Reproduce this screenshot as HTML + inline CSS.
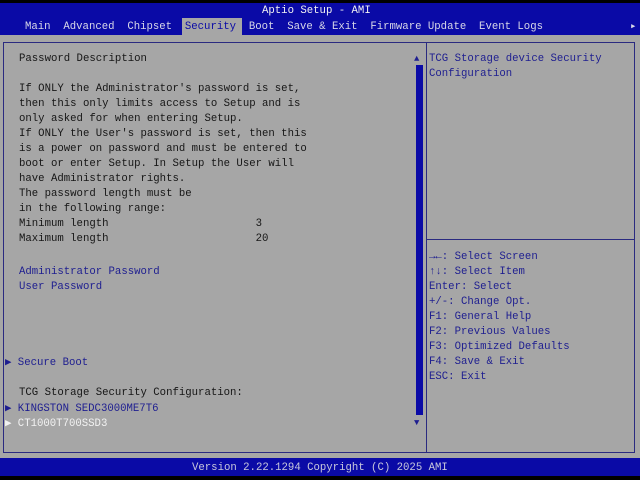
<!DOCTYPE html>
<html><head><meta charset="utf-8"><style>
*{margin:0;padding:0;box-sizing:border-box}
body{width:640px;height:480px;background:#000;position:relative;overflow:hidden;font-family:"Liberation Mono","DejaVu Sans Mono",monospace;font-size:10.67px;}
.a{position:absolute;white-space:pre;line-height:15px}
.k{color:#161616}.b{color:#1e1e90}.w{color:#f2f2f2}
</style></head><body>
<div style="position:absolute;left:0;top:3px;width:640px;height:32px;background:#0a0aa6"></div>
<div style="position:absolute;left:0;top:35px;width:640px;height:423px;background:#a6a6a6"></div>
<div style="position:absolute;left:0;top:458px;width:640px;height:18px;background:#0a0aa6"></div>
<div style="position:absolute;left:182px;top:18px;width:60px;height:17px;background:#a6a6a6"></div>
<div class="a w" style="left:262px;top:4px">Aptio Setup - AMI</div>
<div class="a" style="left:25px;top:20px;color:#d8d8e8">Main  Advanced  Chipset  <span style="color:#0a0aa6">Security</span>  Boot  Save &amp; Exit  Firmware Update  Event Logs</div>
<div class="a" style="left:630px;top:20px;color:#d8d8e8">▸</div>
<div style="position:absolute;left:3px;top:42px;width:424px;height:411px;border:1px solid #2a2a80"></div>
<div style="position:absolute;left:426px;top:42px;width:209px;height:411px;border:1px solid #2a2a80"></div>
<div style="position:absolute;left:427px;top:239px;width:207px;height:1px;background:#2a2a80"></div>
<div style="position:absolute;left:416px;top:65px;width:7px;height:350px;background:#0a0aa6"></div>
<div class="a b" style="left:414px;top:52px;font-size:9px">▲</div>
<div class="a b" style="left:414px;top:416px;font-size:9px">▼</div>
<div class="a k" style="left:19px;top:52px">Password Description

If ONLY the Administrator's password is set,
then this only limits access to Setup and is
only asked for when entering Setup.
If ONLY the User's password is set, then this
is a power on password and must be entered to
boot or enter Setup. In Setup the User will
have Administrator rights.
The password length must be
in the following range:
Minimum length                       3
Maximum length                       20</div>
<div class="a b" style="left:19px;top:265px">Administrator Password
User Password</div>
<div class="a b" style="left:5px;top:356px">▶ Secure Boot</div>
<div class="a k" style="left:19px;top:386px">TCG Storage Security Configuration:</div>
<div class="a b" style="left:5px;top:402px">▶ KINGSTON SEDC3000ME7T6</div>
<div class="a w" style="left:5px;top:417px">▶ CT1000T700SSD3</div>
<div class="a b" style="left:429px;top:52px">TCG Storage device Security
Configuration</div>
<div class="a b" style="left:429px;top:250px">→←: Select Screen
↑↓: Select Item
Enter: Select
+/-: Change Opt.
F1: General Help
F2: Previous Values
F3: Optimized Defaults
F4: Save &amp; Exit
ESC: Exit</div>
<div class="a" style="left:192px;top:461px;color:#c8c8dc">Version 2.22.1294 Copyright (C) 2025 AMI</div>
</body></html>
